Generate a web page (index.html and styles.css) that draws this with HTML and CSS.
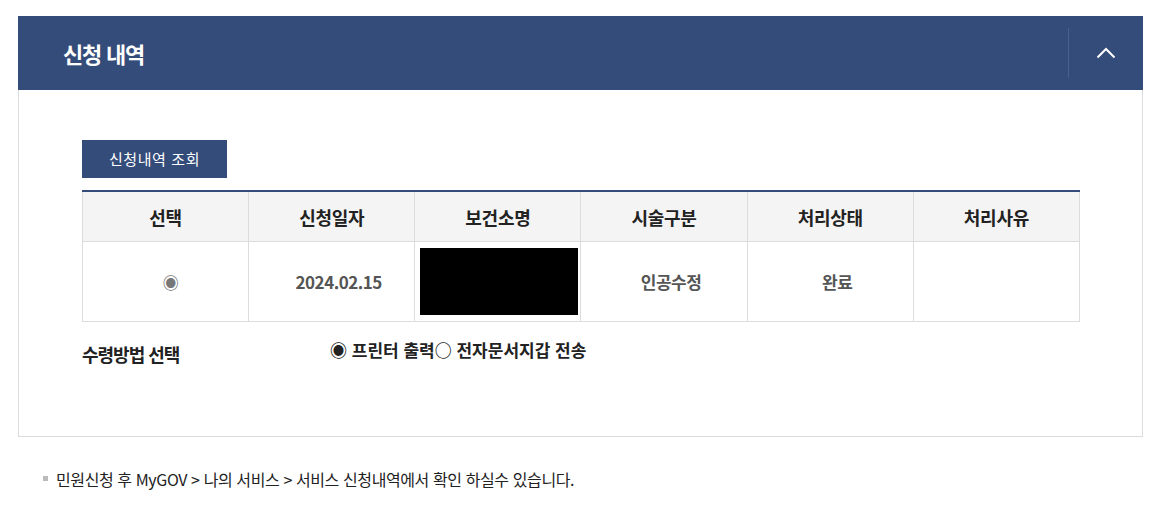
FILE: index.html
```html
<!DOCTYPE html>
<html lang="ko">
<head>
    <meta charset="UTF-8">
    <title>신청 내역</title>
    <link rel="stylesheet" href="styles.css">
</head>
<body>

<div class="section">
    <div class="section-head">
        <h2>신청 내역</h2>
        <button class="toggle" type="button" aria-label="접기">
            <svg width="20" height="12" viewBox="0 0 20 12"><path d="M1.5 10.5 L10 2 L18.5 10.5" fill="none" stroke="#fff" stroke-width="2"/></svg>
        </button>
    </div>
    <div class="section-body">
        <button class="btn-search" type="button">신청내역 조회</button>
        <table class="list">
            <thead>
                <tr>
                    <th>선택</th>
                    <th>신청일자</th>
                    <th>보건소명</th>
                    <th>시술구분</th>
                    <th>처리상태</th>
                    <th>처리사유</th>
                </tr>
            </thead>
            <tbody>
                <tr>
                    <td class="sel">◉</td>
                    <td>2024.02.15</td>
                    <td class="masked"><span class="redact"></span></td>
                    <td>인공수정</td>
                    <td>완료</td>
                    <td></td>
                </tr>
            </tbody>
        </table>
        <div class="receive">
            <span class="receive-label">수령방법 선택</span>
            <span class="receive-opts">◉ 프린터 출력○ 전자문서지갑 전송</span>
        </div>
    </div>
</div>

<p class="note">민원신청 후 MyGOV &gt; 나의 서비스 &gt; 서비스 신청내역에서 확인 하실수 있습니다.</p>

</body>
</html>
```

FILE: styles.css
```css
body {
    margin: 0;
    padding: 16px 14px 0 18px;
    font-family: "Noto Sans CJK KR", "Noto Sans", sans-serif;
    color: #222;
    background: #fff;
}

.section {
    width: 1125px;
}

.section-head {
    height: 74px;
    background-color: #344c79;
    display: flex;
    align-items: center;
    justify-content: space-between;
}

.section-head h2 {
    margin: 0 0 0 45px;
    color: #fff;
    font-size: 22px;
    font-weight: 700;
    letter-spacing: -1.2px;
}

.toggle {
    width: 75px;
    height: 50px;
    border: none;
    border-left: 1px solid #4b6089;
    background: none;
    display: flex;
    align-items: center;
    justify-content: center;
    padding: 0;
    cursor: pointer;
}

.section-body {
    border: 1px solid #dcdcdc;
    border-top: none;
    padding: 50px 62px 0 63px;
    height: 347px;
    box-sizing: border-box;
}

.btn-search {
    display: block;
    width: 145px;
    height: 38px;
    background-color: #344c79;
    color: #fff;
    border: none;
    font-family: inherit;
    font-size: 15px;
    letter-spacing: 0.6px;
    padding: 0 0 2px;
}

.list {
    width: 998px;
    margin-top: 12px;
    border-collapse: collapse;
    table-layout: fixed;
    border-top: 2px solid #344c79;
}

.list th,
.list td {
    border: 1px solid #dcdcdc;
    text-align: center;
    padding: 0;
    line-height: 20px;
}

.list th {
    height: 49px;
    background-color: #f4f4f4;
    font-size: 18px;
    font-weight: 700;
    letter-spacing: -0.3px;
    color: #222;
}

.list td {
    height: 79px;
    padding-left: 14px;
    font-size: 17px;
    font-weight: 700;
    letter-spacing: -0.5px;
    color: #555;
}

.list td.sel {
    font-size: 16px;
    color: #777;
    padding-left: 10px;
}

.list td.masked {
    padding: 0 2px 0 5px;
}

.redact {
    display: block;
    height: 67px;
    margin-bottom: 1px;
    background: #000;
}

.receive {
    display: flex;
    align-items: flex-start;
    margin-top: 16px;
    line-height: 24px;
}

.receive-label {
    width: 248px;
    padding-top: 4px;
    font-size: 18px;
    font-weight: 700;
    letter-spacing: -1px;
}

.receive-opts {
    font-size: 17px;
    font-weight: 700;
    letter-spacing: 0;
}

.note {
    margin: 30px 0 0 25px;
    padding-left: 13px;
    position: relative;
    font-size: 16px;
    letter-spacing: -0.4px;
    color: #222;
}

.note::before {
    content: "";
    position: absolute;
    left: 0;
    top: 9px;
    width: 5px;
    height: 5px;
    background: #bbb;
}
```
